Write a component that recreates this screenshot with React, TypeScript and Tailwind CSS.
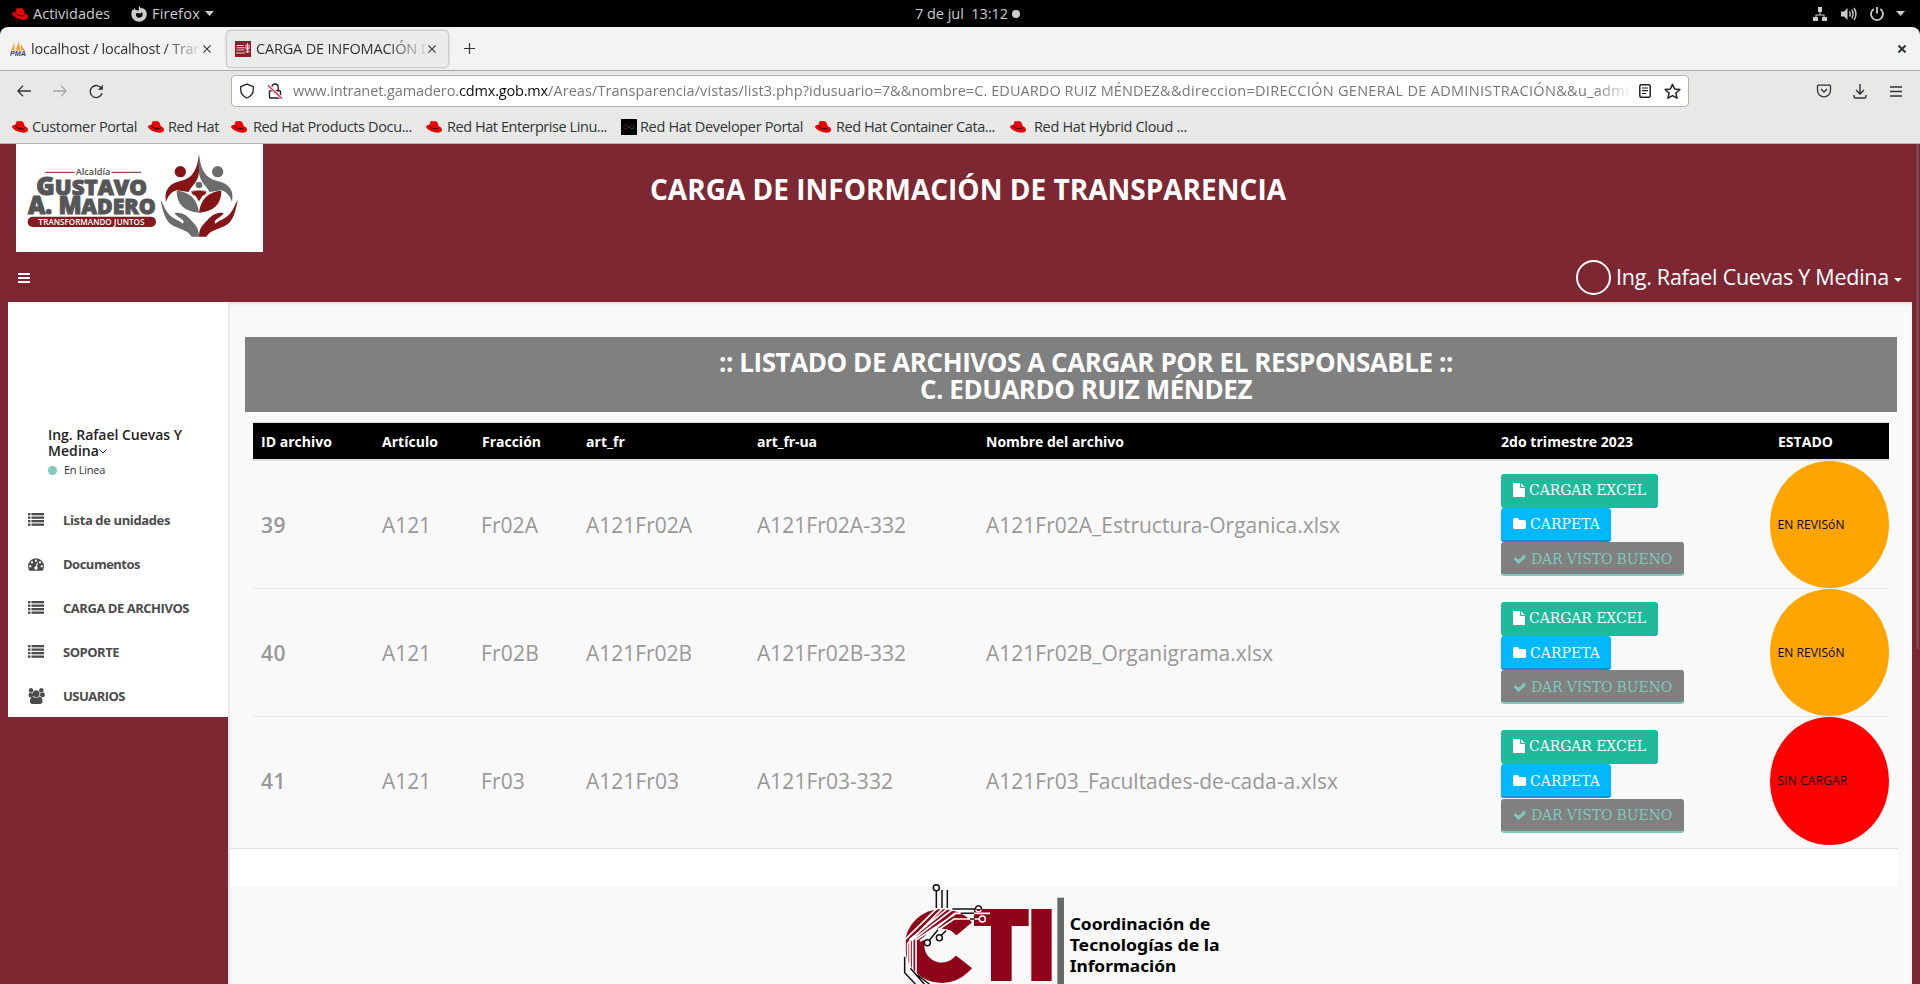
import React, { useLayoutEffect, useRef } from "react";

/* Text that spreads its letters to take up a given width. */
function Fit({ w, className = "", children }: { w: number; className?: string; children: string }) {
  const ref = useRef<HTMLSpanElement>(null);
  useLayoutEffect(() => {
    const el = ref.current;
    if (!el) return;
    el.style.letterSpacing = "0px";
    const natural = el.getBoundingClientRect().width;
    el.style.letterSpacing = `${(w - natural) / children.length}px`;
  }, [w, children]);
  return (
    <span ref={ref} className={`inline-block shrink-0 whitespace-pre ${className}`}>
      {children}
    </span>
  );
}

function RedHat({ className = "" }: { className?: string }) {
  return (
    <svg className={`h-3 w-4 shrink-0 ${className}`} viewBox="0 0 16 12">
      <path
        d="M4.3 1.2C4.6.1 5.4-.2 6.4.2c.8.3 1.3.1 2-.1 1.6-.2 3 .9 3.5 2.6l.8 2.6c1.900.6 3.400 1.900 3.300 3.600-.1 2.200-2.800 3.100-5.900 2.700C5.900 11.100.8 8.600.1 6.100-.2 4.800 1.200 4 3.300 4z"
        fill="#ee0000"
      />
      <path d="M3.3 3.800c.3 1.600 2.600 3.100 5.300 3.500 2.300.4 4-.2 4-1.400l.1.900c0 1.200-1.800 1.900-4.300 1.500C5.500 7.800 3 6.200 3 4.800z" fill="#160000" />
    </svg>
  );
}

function FaGlyph({ d, box, className }: { d: string; box: string; className: string }) {
  return (
    <svg className={`shrink-0 ${className}`} viewBox={box} fill="currentColor">
      <path d={d} />
    </svg>
  );
}

const CHECK =
  "M1671 566q0 40-28 68l-724 724-136 136q-28 28-68 28t-68-28l-136-136-362-362q-28-28-28-68t28-68l136-136q28-28 68-28t68 28l294 295 656-657q28-28 68-28t68 28l136 136q28 28 28 68z";
const FILE =
  "M1152 512v-472q22 14 36 28l408 408q14 14 28 36h-472zm-128 32q0 40 28 68t68 28h544v1056q0 40-28 68t-68 28h-1344q-40 0-68-28t-28-68v-1600q0-40 28-68t68-28h800v544z";
const FOLDER =
  "M1728 608v704q0 92-66 158t-158 66h-1216q-92 0-158-66t-66-158v-960q0-92 66-158t158-66h320q92 0 158 66t66 158v32h672q92 0 158 66t66 158z";
const USERS =
  "M657 896q-162 5-265 128h-134q-82 0-138-40.5t-56-118.5q0-353 124-353 6 0 43.500 21t97.500 42.500 119 21.500q67 0 133-23-5 37-5 66 0 159 92 290zm975 637q0 120-73 189.500t-194 69.500h-874q-121 0-194-69.500t-73-189.500q0-53 3.500-103.500t14-109 26.500-108.500 43-97.500 62-81 85.500-53.500 111.500-20q10 0 43 21.500t73 48 107 48 135 21.500 135-21.500 107-48 73-48 43-21.500q61 0 111.500 20t85.500 53.500 62 81 43 97.500 26.500 108.500 14 109 3.500 103.500zm-1024-1277q0 106-75 181t-181 75-181-75-75-181 75-181 181-75 181 75 75 181zm704 384q0 159-112.500 271.500t-271.500 112.500-271.500-112.500-112.500-271.500 112.500-271.500 271.500-112.500 271.500 112.500 112.500 271.500zm576 225q0 78-56 118.500t-138 40.500h-134q-103-123-265-128 92-131 92-290 0-29-5-66 66 23 133 23 59 0 119-21.500t97.500-42.500 43.500-21q124 0 124 353zm-128-609q0 106-75 181t-181 75-181-75-75-181 75-181 181-75 181 75 75 181z";
const DASHBOARD =
  "M384 1152q0-53-37.500-90.500t-90.500-37.500-90.500 37.500-37.500 90.500 37.500 90.500 90.500 37.500 90.500-37.500 37.500-90.500zm192-448q0-53-37.500-90.500t-90.500-37.500-90.500 37.500-37.500 90.500 37.500 90.500 90.500 37.500 90.500-37.500 37.500-90.500zm428 481l101-382q6-26-7.500-48.500t-38.500-29.500-48 6.500-30 39.500l-101 382q-60 5-107 43.500t-63 98.500q-20 77 20 146t117 89 146-20 89-117q16-60-6-117t-72-91zm660-33q0-53-37.500-90.500t-90.500-37.500-90.500 37.500-37.500 90.500 37.500 90.500 90.500 37.500 90.500-37.500 37.500-90.500zm-640-640q0-53-37.500-90.500t-90.500-37.500-90.500 37.500-37.500 90.500 37.500 90.500 90.500 37.500 90.500-37.500 37.500-90.500zm448 192q0-53-37.500-90.500t-90.500-37.500-90.500 37.500-37.500 90.500 37.500 90.500 90.500 37.500 90.500-37.500 37.500-90.500zm320 448q0 261-141 483-19 29-54 29h-1402q-35 0-54-29-141-221-141-483 0-182 71-348t191-286 286-191 348-71 348 71 286 191 191 286 71 348z";

function ListIcon() {
  return (
    <svg className="h-[13px] w-4 shrink-0" viewBox="0 0 16 13" fill="currentColor">
      {[0, 3.5, 7, 10.5].map((y) => (
        <g key={y}>
          <rect x="0" y={y} width="2.5" height="2.3" />
          <rect x="3.5" y={y} width="12.5" height="2.3" />
        </g>
      ))}
    </svg>
  );
}

/* Desktop bar */
function DesktopBar() {
  return (
    <div className="flex h-[27px] items-center bg-black pl-3 text-[14.5px] font-medium leading-[26px] text-[#cccccc]">
      <RedHat />
      <Fit w={77} className="ml-[5px]">Actividades</Fit>
      <svg className="ml-[21px] h-4 w-4 shrink-0" viewBox="0 0 16 16">
        <path
          d="M8.2 0c.7 1 1.200 1.500 1.800 2.200 1.600-.2 2.600.1 3.900 1.300C15.200 4.800 16 6.600 15.700 9c-.4 3.800-3.700 6.700-7.600 6.700C3.900 15.700.5 12.500.4 8.300.3 6.200.9 4.600 1.500 3.300l.4 1.200L4 1.800l.2 2.100c.9-.1 1.700.1 2.300.6L8 4.300c-.2-1.400-.3-2.800.2-4.300z"
          fill="#cccccc"
        />
        <path d="M5.3 7.300c-.9 2.400.6 4.500 2.900 4.500 2.400 0 3.900-1.900 3.400-4.200-.2-.8-.6-1.300-1.100-1.700-.2 1-1 1.600-2 1.500-1.100-.1-2.100-.6-3.200-.1z" fill="#000" />
      </svg>
      <Fit w={48} className="ml-[5px]">Firefox</Fit>
      <svg className="ml-[5px] h-[5px] w-[9px]" viewBox="0 0 9 5"><path d="M0 0h9L4.500 5z" fill="#ccc" /></svg>
      <Fit w={93} className="ml-[701px]">7 de jul  13:12</Fit>
      <span className="ml-[4px] h-2 w-2 rounded-full bg-[#cccccc]" />
      <svg className="ml-auto h-4 w-4" viewBox="0 0 16 16" fill="#ccc">
        <path d="M6 1h4v5H6zM1 11h5v4H1zM10 11h5v4h-5zM7.500 6h1v2.500h4V11h-1V9.500h-7V11h-1V8.500h4z" />
      </svg>
      <svg className="ml-[13px] h-4 w-4" viewBox="0 0 16 16" fill="none" stroke="#ccc" strokeWidth="1.4">
        <path d="M0 5.500h3L6.500 2v12L3 10.500H0z" fill="#ccc" stroke="none" />
        <path d="M8.500 5.500q1.500 2.500 0 5M10.800 3.700q2.600 4.300 0 8.600M13 2q4 6 0 12" />
      </svg>
      <svg className="ml-3 h-4 w-4" viewBox="0 0 16 16" fill="none" stroke="#ccc" strokeWidth="1.8">
        <path d="M4.800 3a6 6 0 1 0 6.400 0M8 1v6.500" />
      </svg>
      <svg className="ml-[11px] mr-[15px] h-[5px] w-[9px]" viewBox="0 0 9 5"><path d="M0 0h9L4.500 5z" fill="#ccc" /></svg>
    </div>
  );
}

function CloseX() {
  return (
    <svg className="h-2 w-2 shrink-0" viewBox="0 0 8 8" stroke="#2e3436" strokeWidth="1.1">
      <path d="M.4.4l7.200 7.200M7.600.4L.4 7.600" />
    </svg>
  );
}

function TabStrip() {
  return (
    <div className="bg-black">
      <div className="flex h-11 items-center rounded-t-lg border-b border-[#a8a8a8] bg-[#f3f3f3] text-[14.5px] text-[#2e3436]">
        <div className="flex w-[227px] items-center pl-[10px]">
          <svg className="h-4 w-4 shrink-0" viewBox="0 0 16 16">
            <path d="M4.5 1.500L1 9.500h3.500zM8.800 0L5.500 9.500h4.700zM10.800 3v6.500h4z" fill="#f7a23b" />
            <text x="0" y="15" fontFamily="Liberation Sans" fontWeight="bold" fontStyle="italic" fontSize="6.5" textLength="16" lengthAdjust="spacingAndGlyphs" fill="#3b3f7c">PMA</text>
          </svg>
          <div className="ml-[5px] w-[168px] overflow-hidden [mask-image:linear-gradient(to_right,#000_80%,transparent_102%)]">
            <Fit w={171}>localhost / localhost / Tran</Fit>
          </div>
          <span className="ml-1"><CloseX /></span>
        </div>
        <div className="flex h-9 w-[221px] items-center rounded bg-[#ebebea] pl-2 shadow-[0_0_3px_rgba(0,0,0,0.45)]">
          <svg className="h-4 w-4 shrink-0" viewBox="0 0 16 16">
            <rect width="16" height="16" fill="#8d1b2a" />
            <path d="M1.500 4.500h7M1.500 6.700h8M1.500 9h8M1 12h9M12.500 2v10M11 3.500v4q1.500 2 3 0v-4M10.800 10q1.700 3 3.600 0" stroke="#e8cfd2" strokeWidth="1.1" fill="none" />
          </svg>
          <div className="ml-[5px] w-[170px] overflow-hidden [mask-image:linear-gradient(to_right,#000_78%,transparent_103%)]">
            <Fit w={175}>CARGA DE INFOMACIÓN D</Fit>
          </div>
          <span className="ml-[2px]"><CloseX /></span>
        </div>
        <svg className="ml-4 h-[11px] w-[11px]" viewBox="0 0 11 11" stroke="#2e3436" strokeWidth="1.2"><path d="M5.500 0v11M0 5.500h11" /></svg>
        <svg className="ml-auto mr-[14px] h-2 w-2" viewBox="0 0 8 8" stroke="#2e3436" strokeWidth="2"><path d="M.5.5l7 7M7.500.5l-7 7" /></svg>
      </div>
    </div>
  );
}

function Toolbar() {
  return (
    <div className="flex h-[40px] items-center bg-[#e8e8e7] text-[14.5px]">
      <svg className="ml-[17px] h-3 w-[14px]" viewBox="0 0 14 12" fill="none" stroke="#2e3436" strokeWidth="1.3"><path d="M14 6H1M6 .8L.8 6 6 11.200" /></svg>
      <svg className="ml-[22px] h-3 w-[14px]" viewBox="0 0 14 12" fill="none" stroke="#a5a5a5" strokeWidth="1.3"><path d="M0 6h13M8 .8L13.200 6 8 11.200" /></svg>
      <svg className="ml-[22px] h-[15px] w-[15px]" viewBox="0 0 15 15" fill="none" stroke="#2e3436" strokeWidth="1.4">
        <path d="M13 9.300A6 6 0 1 1 12.400 4.500" />
        <path d="M13.900.8v5H8.900z" fill="#2e3436" stroke="none" />
      </svg>
      <div className="ml-[127px] flex h-8 w-[1458px] items-center rounded border border-[#b4b4b4] bg-white">
        <svg className="ml-[7px] h-4 w-4 shrink-0" viewBox="0 0 16 16" fill="none" stroke="#222" strokeWidth="1.3">
          <path d="M8 1.200L14.300 3.600v3.200c0 3.500-2.300 6.500-6.300 8.200-4-1.700-6.300-4.700-6.300-8.200V3.600z" strokeLinejoin="round" />
        </svg>
        <svg className="ml-3 h-4 w-4 shrink-0" viewBox="0 0 16 16" fill="none" stroke="#222" strokeWidth="1.4">
          <rect x="2.5" y="7.7" width="11" height="7.3" rx="1" />
          <path d="M4.800 7.500V4.200a3.200 3.200 0 0 1 6.400 0v3.300" />
          <path d="M1 2.200l14 13.500" stroke="#fff" strokeWidth="3" />
          <path d="M1 2.200l14 13.500" stroke="#e22850" strokeWidth="1.4" />
        </svg>
        <div className="ml-[10px] w-[1336px] shrink-0 overflow-hidden leading-[20px] text-[#777777] [mask-image:linear-gradient(to_right,#000_97.5%,transparent_100.2%)]">
          <div className="flex w-[1400px]">
            <Fit w={166}>www.intranet.gamadero.</Fit>
            <Fit w={89} className="text-[#0c0c0d]">cdmx.gob.mx</Fit>
            <Fit w={612}>/Areas/Transparencia/vistas/list3.php?idusuario=7&&nombre=C. EDUARDO RUIZ MÉNDEZ</Fit>
            <Fit w={95}>&&direccion=</Fit>
            <Fit w={374}>DIRECCIÓN GENERAL DE ADMINISTRACIÓN&&u_admi</Fit>
          </div>
        </div>
        <svg className="ml-[10px] h-[14px] w-3 shrink-0" viewBox="0 0 12 14" fill="none" stroke="#222" strokeWidth="1.5">
          <rect x=".8" y=".8" width="10.4" height="12.4" rx="1.5" />
          <path d="M3 4h6M3 6.700h6M3 9.500h4" strokeWidth="1.2" />
        </svg>
        <svg className="ml-[13px] h-[17px] w-[17px] shrink-0" viewBox="0 0 16 16" fill="none" stroke="#222" strokeWidth="1.4" strokeLinejoin="round">
          <path d="M8 1.200l2 4.500 4.900.5-3.700 3.200 1.100 4.900L8 11.800l-4.300 2.500 1.100-4.900L1.100 6.200 6 5.700z" />
        </svg>
      </div>
      <svg className="ml-[127px] h-[14px] w-4" viewBox="0 0 16 14" fill="none" stroke="#2e3436" strokeWidth="1.3">
        <path d="M2.300 1.200h11.400q.8 0 .8.800v4.500a6.500 6.300 0 0 1-13 0V2q0-.8.8-.8zM5 5l3 3 3-3" />
      </svg>
      <svg className="ml-[21px] h-[15px] w-[14px]" viewBox="0 0 14 15" fill="none" stroke="#2e3436" strokeWidth="1.4">
        <path d="M7 0v9.500M3 6l4 4 4-4M1 11v1.500q0 1.500 1.500 1.500h9q1.500 0 1.500-1.500V11" />
      </svg>
      <svg className="ml-[23px] h-[11px] w-3" viewBox="0 0 12 11" stroke="#2e3436" strokeWidth="1.3"><path d="M0 1h12M0 5.500h12M0 10h12" /></svg>
    </div>
  );
}

function Bookmarks() {
  const items = [
    { slot: "w-[136px]", w: 105, gap: "ml-1", label: "Customer Portal" },
    { slot: "w-[83px]", w: 51, gap: "ml-[4px]", label: "Red Hat" },
    { slot: "w-[195px]", w: 159, gap: "ml-[6px]", label: "Red Hat Products Docu..." },
    { slot: "w-[195px]", w: 160, gap: "ml-[5px]", label: "Red Hat Enterprise Linu..." },
    { slot: "w-[194px]", w: 163, gap: "ml-[3px]", label: "Red Hat Developer Portal", dev: true },
    { slot: "w-[195px]", w: 159, gap: "ml-[5px]", label: "Red Hat Container Cata..." },
    { slot: "w-[190px]", w: 153, gap: "ml-[8px]", label: "Red Hat Hybrid Cloud ..." },
  ];
  return (
    <div className="flex h-[33px] items-center border-b border-[#b4b4b2] bg-[#e8e8e7] pl-3 text-[14.5px] leading-[20px] text-[#2e3436]">
      {items.map((b) => (
        <div key={b.label} className={`flex shrink-0 items-center ${b.slot}`}>
          {b.dev ? (
            <svg className="h-4 w-4 shrink-0" viewBox="0 0 16 16">
              <rect width="16" height="16" fill="#000" />
              <path d="M8 8q-2.500-3.500-4.500-1.500t0 3T8 8q2.500-3.500 4.500-1.500" fill="none" stroke="#5a1f1f" />
              <path d="M12.500 6.500q2 1.500 0 3T8 8" fill="none" stroke="#1f4a4a" />
            </svg>
          ) : (
            <RedHat />
          )}
          <Fit w={b.w} className={b.gap}>{b.label}</Fit>
        </div>
      ))}
    </div>
  );
}

function BoroughLogo() {
  return (
    <svg className="h-[108px] w-[247px] bg-white" viewBox="0 0 741 324">
      <g fontFamily="Open Sans, Noto Sans, sans-serif">
        <path d="M88 85h88M287 85h88" stroke="#8a1a22" strokeWidth="3" />
        <text x="179" y="93" fontSize="27" fontWeight="600" fill="#4a4a4a" textLength="104" lengthAdjust="spacingAndGlyphs">Alcaldía</text>
        <g fill="#555657" stroke="#555657" strokeWidth="3" fontWeight="800">
          <text x="61" y="153" fontSize="65" textLength="332" lengthAdjust="spacingAndGlyphs">
            <tspan fontSize="73">G</tspan>USTAVO
          </text>
          <text x="36" y="210" fontSize="65" textLength="383" lengthAdjust="spacingAndGlyphs">
            <tspan fontSize="73">A. M</tspan>ADERO
          </text>
        </g>
        <rect x="35" y="218" width="385" height="31" rx="15" fill="#851a20" />
        <text x="66" y="242" fontSize="24" fontWeight="600" fill="#fff" textLength="319" lengthAdjust="spacingAndGlyphs">
          <tspan fontSize="28">T</tspan>RANSFORMANDO <tspan fontSize="28">J</tspan>UNTOS
        </text>
      </g>
      <circle cx="493" cy="83" r="17" fill="#851416" />
      <circle cx="605" cy="83" r="17" fill="#6b6c6d" />
      <circle cx="549" cy="123" r="10" fill="#6b6c6d" />
      <path d="M549 30C545 72 532 95 511 105C492 113 468 114 456 133C447 146 448 160 450 174C456 158 464 144 482 139L518 144C520 134 538 122 546 100C551 84 550 60 549 30z" fill="#851416" />
      <path d="M549 30C553 72 566 95 587 105C606 113 630 114 642 133C651 146 650 160 648 174C642 158 634 144 616 139L580 144C578 134 560 122 552 100C547 84 548 60 549 30z" fill="#6b6c6d" />
      <path d="M482 140c35 2 62 22 67 66-42-3-68-25-67-66z" fill="#6b6c6d" />
      <path d="M616 140c-35 2-62 22-67 66 42-3 68-25 67-66z" fill="#851416" />
      <path d="M524 142q25-8 49 0-2 12-13 14l-11 18-11-18q-11-2-14-14z" fill="#851416" stroke="#fff" strokeWidth="2" />
      <path d="M434 168c8 12 12 28 22 40 14 18 36 22 44 31 6-4 3-9-7-16-8-6-14-9-17-16 18-3 34 5 46 18 14 16 27 24 27 53h-22c-12-17-27-20-45-28-22-9-30-20-37-38-5-15-9-29-11-44z" fill="#6b6c6d" />
      <path d="M665 168c-8 12-12 28-22 40-14 18-36 22-44 31-6-4-3-9 7-16 8-6 14-9 17-16-18-3-34 5-46 18-14 16-28 24-28 53h22c12-17 28-20 46-28 22-9 30-20 37-38 5-15 9-29 11-44z" fill="#851416" />
    </svg>
  );
}

function CtiLogo() {
  return (
    <svg className="relative z-10 -mt-[2px] ml-[670px] h-[100px] w-[324px] shrink-0" viewBox="90 72 972 300">
      <circle cx="215" cy="258" r="111" fill="#8e0519" />
      <circle cx="215" cy="256" r="52" fill="#f9f9f9" />
      <path d="M215 257L306 187l40 60v20l-40 58z" fill="#f9f9f9" />
      <path d="M306 187l-45 38q-15-18-45-19l20-55q45 4 70 36zM306 325l-46-37q-16 20-45 20v50q60 0 91-33z" fill="#8e0519" />
      <path d="M312 147h164v51h-51v165h-62V198h-51zM484 147h61v216h-61z" fill="#8e0519" />
      <g fill="none" stroke="#fff" strokeWidth="5">
        <path d="M200 146l-95 93v52M217 146l-104 104v60M232 146L120 238v90M248 148l-120 92v100M262 158L138 240v100M150 243l104-83h106M160 240l92-63h75M190 206l-37 37" />
      </g>
      <g fill="none" stroke="#111" strokeWidth="4.5">
        <circle cx="199" cy="83" r="9" />
        <path d="M199 92v52M216 90v54M232 90v54M247 147h68M272 160h40M300 177h14" />
        <path d="M317 149a9 9 0 1 1 17 0" />
        <circle cx="208" cy="233" r="9" />
        <circle cx="172" cy="248" r="9" />
        <path d="M214 226l14-14M178 241l26-32M104 290v48l32 34M121 325l42 47M142 345l36 27" />
      </g>
      <g fill="none" stroke="#fff" strokeWidth="4.5">
        <circle cx="337" cy="177" r="9" />
        <path d="M317 149a9 9 0 0 0 17 0" />
      </g>
      <rect x="562" y="113" width="20" height="262" fill="#666869" />
      <g fontFamily="Noto Sans, DejaVu Sans, sans-serif" fontWeight="bold" fontSize="50" fill="#000">
        <text x="599" y="210" textLength="422" lengthAdjust="spacingAndGlyphs">Coordinación de</text>
        <text x="599" y="273" textLength="450" lengthAdjust="spacingAndGlyphs">Tecnologías de la</text>
        <text x="599" y="336" textLength="320" lengthAdjust="spacingAndGlyphs">Información</text>
      </g>
    </svg>
  );
}

function Sidebar() {
  const entries: { icon: React.ReactNode; label: string; w: number }[] = [
    { icon: <ListIcon />, label: "Lista de unidades", w: 107 },
    { icon: <FaGlyph d={DASHBOARD} box="0 0 1792 1792" className="h-4 w-4" />, label: "Documentos", w: 77 },
    { icon: <ListIcon />, label: "CARGA DE ARCHIVOS", w: 126 },
    { icon: <ListIcon />, label: "SOPORTE", w: 56 },
    { icon: <FaGlyph d={USERS} box="0 0 1920 1792" className="h-4 w-[17px]" />, label: "USUARIOS", w: 62 },
  ];
  return (
    <aside className="h-[415px] w-[220px] shrink-0 bg-white pt-[125px] text-[#4b4b4b]">
      <div className="pl-10 text-[14px] font-semibold leading-4 text-[#222]">
        <div><Fit w={134}>Ing. Rafael Cuevas Y</Fit></div>
        <div className="flex items-center">
          <Fit w={51}>Medina</Fit>
          <svg className="h-[5px] w-2" viewBox="0 0 8 5" fill="none" stroke="#222" strokeWidth="1"><path d="M.5.5L4 4 7.500.5" /></svg>
        </div>
      </div>
      <div className="mt-[3px] flex h-[16px] items-center pl-10 text-[11px] text-[#333]">
        <span className="mr-[7px] h-[9px] w-[9px] rounded-full bg-[#7fccbd]" />
        <Fit w={41}>En Linea</Fit>
      </div>
      <nav className="mt-[21px]">
        {entries.map((e) => (
          <div key={e.label} className="flex h-11 items-center pl-5">
            <span className="flex w-[35px] pb-[3px]">{e.icon}</span>
            <Fit w={e.w} className="text-[13px] font-bold">{e.label}</Fit>
          </div>
        ))}
      </nav>
    </aside>
  );
}

type Row = { id: string; fr: string; frW: number; af: string; afW: number; ua: string; uaW: number; file: string; fileW: number; state: string; red?: boolean };

const rows: Row[] = [
  { id: "39", fr: "Fr02A", frW: 57, af: "A121Fr02A", afW: 106, ua: "A121Fr02A-332", uaW: 149, file: "A121Fr02A_Estructura-Organica.xlsx", fileW: 354, state: "EN REVISóN" },
  { id: "40", fr: "Fr02B", frW: 58, af: "A121Fr02B", afW: 106, ua: "A121Fr02B-332", uaW: 149, file: "A121Fr02B_Organigrama.xlsx", fileW: 287, state: "EN REVISóN" },
  { id: "41", fr: "Fr03", frW: 44, af: "A121Fr03", afW: 93, ua: "A121Fr03-332", uaW: 136, file: "A121Fr03_Facultades-de-cada-a.xlsx", fileW: 352, state: "SIN CARGAR", red: true },
];

const GRID = "grid grid-cols-[121px_100px_104px_171px_229px_515px_277px_119px]";

function FileRow({ r }: { r: Row }) {
  return (
    <div className={`${GRID} h-[128px] items-center text-[21px] text-[#989898] ${r.red ? "" : "border-b border-[#e6e9ec]"}`}>
      <Fit w={25} className="ml-2 justify-self-start pt-[2px] font-semibold">{r.id}</Fit>
      <Fit w={49} className="ml-2 justify-self-start pt-[2px]">A121</Fit>
      <Fit w={r.frW} className="ml-[7px] justify-self-start pt-[2px]">{r.fr}</Fit>
      <Fit w={r.afW} className="ml-2 justify-self-start pt-[2px]">{r.af}</Fit>
      <Fit w={r.uaW} className="ml-2 justify-self-start pt-[2px]">{r.ua}</Fit>
      <Fit w={r.fileW} className="ml-2 justify-self-start pt-[2px]">{r.file}</Fit>
      <div className="ml-2 flex flex-col items-start font-['DejaVu_Serif',serif] text-[14px] leading-[30px]">
        <div className="flex h-[34px] w-[157px] items-center rounded-[3px] bg-[#1dbb9b] pb-[2px] pl-3 text-white">
          <FaGlyph d={FILE} box="128 0 1536 1792" className="h-[14px] w-3" />
          <Fit w={117} className="ml-1">CARGAR EXCEL</Fit>
        </div>
        <div className={`flex h-[34px] w-[110px] items-center rounded-[3px] border-b-2 border-[#0095cc] bg-[#00b8ff] pl-3 text-white ${r.id === "39" ? "" : "pt-[2px]"}`}>
          <FaGlyph d={FOLDER} box="64 128 1664 1408" className="h-[11px] w-[13px]" />
          <Fit w={70} className="ml-1">CARPETA</Fit>
        </div>
        <div className={`flex h-[34px] w-[183px] items-center rounded-[3px] border-b-2 border-[#7ccbbd] bg-[#808080] pl-3 text-[#7fc9bb] ${r.red ? "mt-px" : "pt-[2px]"}`}>
          <FaGlyph d={CHECK} box="0 0 1792 1792" className="h-[14px] w-[14px]" />
          <Fit w={141} className="ml-1">DAR VISTO BUENO</Fit>
        </div>
      </div>
      <div className={`flex items-center rounded-[50%] pl-[7.5px] text-[12px] text-black ${r.red ? "h-[128px] bg-[#ff0000]" : "h-[127px] bg-[#ffa500]"}`}>
        <Fit w={r.red ? 70 : 67}>{r.state}</Fit>
      </div>
    </div>
  );
}

export default function App() {
  const heads: [string, number][] = [
    ["ID archivo", 71],
    ["Artículo", 56],
    ["Fracción", 59],
    ["art_fr", 39],
    ["art_fr-ua", 60],
    ["Nombre del archivo", 138],
    ["2do trimestre 2023", 132],
    ["ESTADO", 55],
  ];
  return (
    <div className="flex h-[984px] w-[1920px] flex-col overflow-hidden bg-[#7d2733] font-['Open_Sans','Noto_Sans',sans-serif]">
      <DesktopBar />
      <TabStrip />
      <Toolbar />
      <Bookmarks />
      <div className="flex h-[840px] shrink-0">
        <div className="flex w-[1916px] shrink-0 flex-col">
          <header className="flex h-[108px] shrink-0 pl-4">
            <BoroughLogo />
            <h1 className="ml-[387px] mt-[25px] text-[28px] font-bold leading-[40px] text-white"><Fit w={636}>CARGA DE INFORMACIÓN DE TRANSPARENCIA</Fit></h1>
          </header>
          <div className="flex h-[50px] shrink-0 items-center pl-[18px] text-white">
            <svg className="mt-[2px] h-[10px] w-3" viewBox="0 0 12 10" fill="#fff"><path d="M0 0h12v2H0zM0 4h12v2H0zM0 8h12v2H0z" /></svg>
            <span className="ml-auto h-[35px] w-[35px] rounded-full border-2 border-white" />
            <Fit w={273} className="ml-[5px] text-[21.5px]">Ing. Rafael Cuevas Y Medina</Fit>
            <svg className="ml-[5px] mr-[14px] mt-[5px] h-1 w-2" viewBox="0 0 8 4" fill="#fff"><path d="M0 0h8L4 4z" /></svg>
          </div>
          <div className="flex pl-2">
            <Sidebar />
            <main className="flex h-[682px] w-[1684px] shrink-0 flex-col border-l-2 border-[#e6e9ee] bg-[#f9f9f9] shadow-[inset_0_4px_4px_-3px_rgba(0,0,0,0.15)]">
              <div className="ml-[15px] mt-[35px] flex h-[75px] w-[1652px] shrink-0 flex-col items-center bg-[#808080] pl-[30px] pt-[12px] text-[26px] font-bold leading-[27px] text-white">
                <Fit w={734}>:: LISTADO DE ARCHIVOS A CARGAR POR EL RESPONSABLE ::</Fit>
                <Fit w={332}>C. EDUARDO RUIZ MÉNDEZ</Fit>
              </div>
              <div className="ml-[23px] mt-[10px] w-[1636px] shrink-0">
                <div className={`${GRID} h-[39px] items-center border-b-2 border-t border-[#dddddd] bg-black text-[14px] font-bold text-white [background-clip:padding-box]`}>
                  {heads.map(([h, w]) => (
                    <Fit key={h} w={w} className="ml-2 justify-self-start">{h}</Fit>
                  ))}
                </div>
                {rows.map((r) => (
                  <FileRow key={r.id} r={r} />
                ))}
              </div>
              <div className="mt-[3px] h-[38px] w-[1668px] shrink-0 border-t border-[#e2e6ea] bg-white" />
              <CtiLogo />
            </main>
          </div>
        </div>
        <div className="h-[505px] w-[3px] bg-[#7d4551]" />
      </div>
    </div>
  );
}
